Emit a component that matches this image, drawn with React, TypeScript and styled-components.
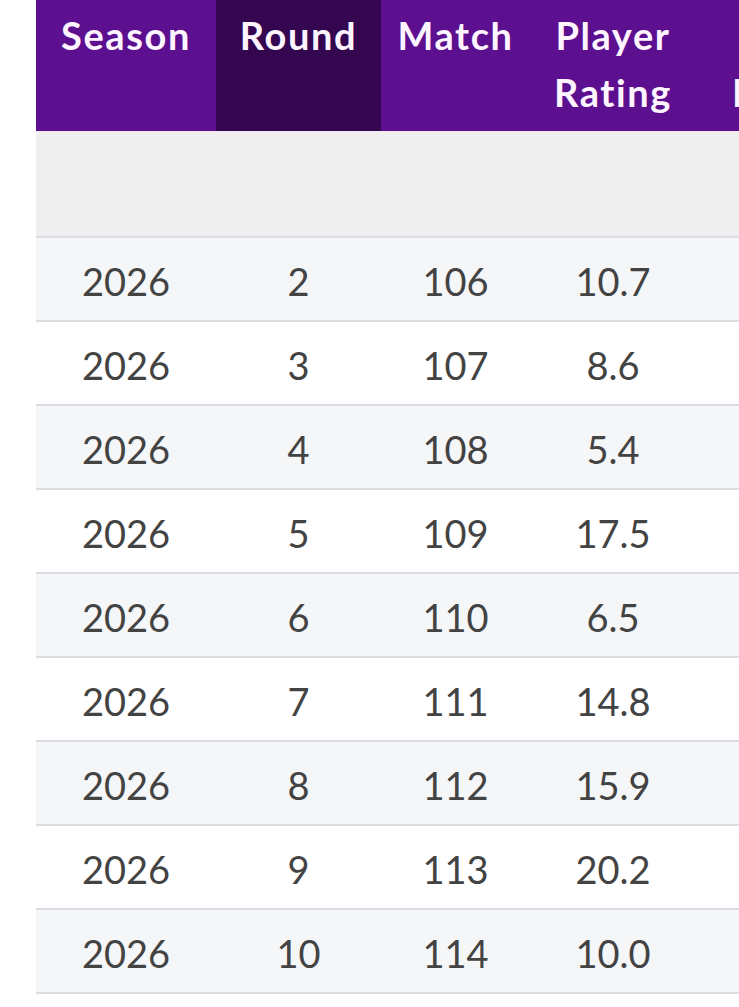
import React from "react";
import styled, { createGlobalStyle } from "styled-components";

const GlobalStyle = createGlobalStyle`
  html, body {
    margin: 0;
    padding: 0;
    background: #ffffff;
  }
  body {
    font-family: "Lato", "Noto Sans", sans-serif;
  }
`;

const Page = styled.div`
  width: 739px;
  height: 1007px;
  overflow: hidden;
  padding-left: 36px;
  box-sizing: border-box;
  background: #ffffff;
`;

const Table = styled.table`
  table-layout: fixed;
  border-collapse: collapse;
  width: 850px;
  font-family: "Lato", "Noto Sans", sans-serif;
`;

const HeadCell = styled.th<{ $active?: boolean }>`
  height: 131px;
  box-sizing: border-box;
  padding: 7px 8px 0;
  vertical-align: top;
  text-align: center;
  font-size: 38px;
  line-height: 57px;
  font-weight: 700;
  letter-spacing: 1.6px;
  color: #fdf4ff;
  background: ${(p) => (p.$active ? "#33064f" : "#5c0f8f")};
  border-bottom: 1px solid #f3e6f7;
`;

const EmptyRow = styled.tr`
  height: 106px;
  background: #efeff0;
  border-bottom: 2px solid #dcdde2;
`;

const Row = styled.tr<{ $striped: boolean }>`
  height: 84px;
  background: ${(p) => (p.$striped ? "#f5f6f8" : "#ffffff")};
  border-bottom: 2px solid #dcdde2;
`;

const Cell = styled.td`
  padding: 3px 12px 0;
  text-align: center;
  vertical-align: middle;
  font-size: 38px;
  font-weight: 400;
  color: #434343;
`;

const rows = [
  { round: 2, match: 106, rating: "10.7" },
  { round: 3, match: 107, rating: "8.6" },
  { round: 4, match: 108, rating: "5.4" },
  { round: 5, match: 109, rating: "17.5" },
  { round: 6, match: 110, rating: "6.5" },
  { round: 7, match: 111, rating: "14.8" },
  { round: 8, match: 112, rating: "15.9" },
  { round: 9, match: 113, rating: "20.2" },
  { round: 10, match: 114, rating: "10.0" },
];

export default function App() {
  return (
    <>
      <GlobalStyle />
      <Page>
        <Table>
          <colgroup>
            <col style={{ width: 180 }} />
            <col style={{ width: 165 }} />
            <col style={{ width: 149 }} />
            <col style={{ width: 166 }} />
            <col style={{ width: 190 }} />
          </colgroup>
          <thead>
            <tr>
              <HeadCell>Season</HeadCell>
              <HeadCell $active>Round</HeadCell>
              <HeadCell>Match</HeadCell>
              <HeadCell>
                Player
                <br />
                Rating
              </HeadCell>
              <HeadCell>
                Form
                <br />
                Rating
              </HeadCell>
            </tr>
          </thead>
          <tbody>
            <EmptyRow>
              <Cell />
              <Cell />
              <Cell />
              <Cell />
              <Cell />
            </EmptyRow>
            {rows.map((r, i) => (
              <Row key={r.round} $striped={i % 2 === 0}>
                <Cell>2026</Cell>
                <Cell>{r.round}</Cell>
                <Cell>{r.match}</Cell>
                <Cell>{r.rating}</Cell>
                <Cell />
              </Row>
            ))}
          </tbody>
        </Table>
      </Page>
    </>
  );
}
